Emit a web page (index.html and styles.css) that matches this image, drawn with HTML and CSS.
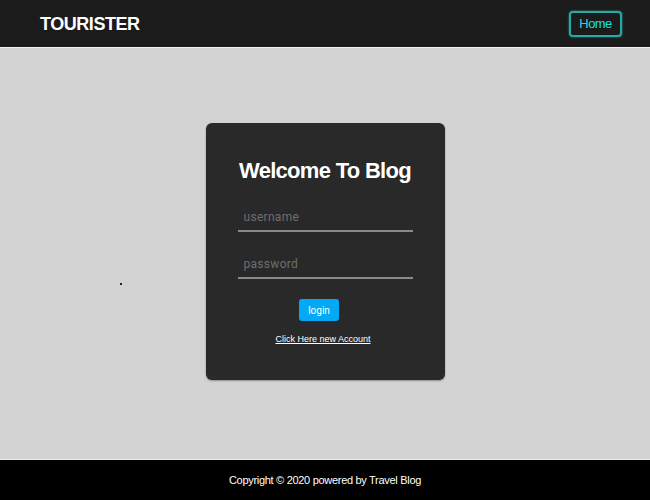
FILE: index.html
```html
<!DOCTYPE html>
<html>
<head>
<meta charset="utf-8">
<link rel="stylesheet" href="styles.css">
</head>
<body>
<header class="nav">
  <div class="brand">TOURISTER</div>
  <a class="home" href="#">Home</a>
</header>
<main class="main">
  <span class="dot"></span>
  <form class="card">
    <h1 class="title">Welcome To Blog</h1>
    <input class="field" type="text" placeholder="username">
    <input class="field" type="password" placeholder="password">
    <button class="login" type="button">login</button>
    <a class="link" href="#">Click Here new Account</a>
  </form>
</main>
<footer class="foot">Copyright © 2020 powered by Travel Blog</footer>
</body>
</html>
```
FILE: styles.css
```css
* { box-sizing: border-box; }
html, body { margin: 0; height: 100%; }
body {
  font-family: "Liberation Sans", Arial, sans-serif;
  background: #d3d3d3;
  display: flex;
  flex-direction: column;
  width: 650px;
  height: 500px;
}
.nav {
  height: 48px;
  background: #1b1b1b;
  border-bottom: 1px solid #f0f0f0;
  display: flex;
  align-items: center;
  justify-content: space-between;
  padding: 0 28px 0 40px;
}
.brand {
  color: #fff;
  font-weight: bold;
  font-size: 18px;
  letter-spacing: -0.45px;
  padding-top: 2px;
}
.home {
  color: #18e0e0;
  text-decoration: none;
  font-size: 13px;
  letter-spacing: -0.6px;
  border: 2px solid #2aa8a8;
  border-radius: 4px;
  box-shadow: 0 0 2px #2aa8a8;
  width: 53px;
  height: 26px;
  display: flex;
  align-items: center;
  justify-content: center;
}
.main {
  flex: 1;
  position: relative;
  display: flex;
  justify-content: center;
  padding-top: 75px;
}
.dot {
  position: absolute;
  left: 120px;
  top: 235px;
  width: 2px;
  height: 2px;
  background: #222;
}
.card {
  width: 239px;
  height: 257px;
  background: #292929;
  border-radius: 6px;
  box-shadow: 0 1px 2px rgba(0,0,0,0.35);
  display: flex;
  flex-direction: column;
  align-items: center;
  padding-top: 35px;
}
.title {
  margin: 0 0 22px;
  color: #fff;
  font-size: 22px;
  font-weight: bold;
  line-height: 26px;
  letter-spacing: -0.7px;
}
.field {
  width: 175px;
  height: 26px;
  background: transparent;
  border: none;
  border-bottom: 2px solid #8a8a8a;
  color: #fff;
  font-family: Roboto, "Liberation Sans", sans-serif;
  font-size: 12px;
  padding: 0 6px 2px;
  margin-bottom: 21px;
  letter-spacing: 0.3px;
  outline: none;
}
.field::placeholder { color: #6e6e6e; }
.login {
  margin: -1px 12px 0 0;
  width: 40px;
  height: 22px;
  background: #03a9f4;
  color: #fff;
  border: none;
  border-radius: 3px;
  font-family: Roboto, "Liberation Sans", sans-serif;
  font-size: 10px;
  padding: 0;
}
.link {
  margin: 13px 4px 0 0;
  color: #fff;
  font-size: 9px;
  text-decoration: underline;
}
.foot {
  height: 41px;
  background: #000;
  border-top: 1px solid #e8e8e8;
  color: #fff;
  font-size: 11px;
  letter-spacing: -0.3px;
  display: flex;
  align-items: center;
  justify-content: center;
}
```
